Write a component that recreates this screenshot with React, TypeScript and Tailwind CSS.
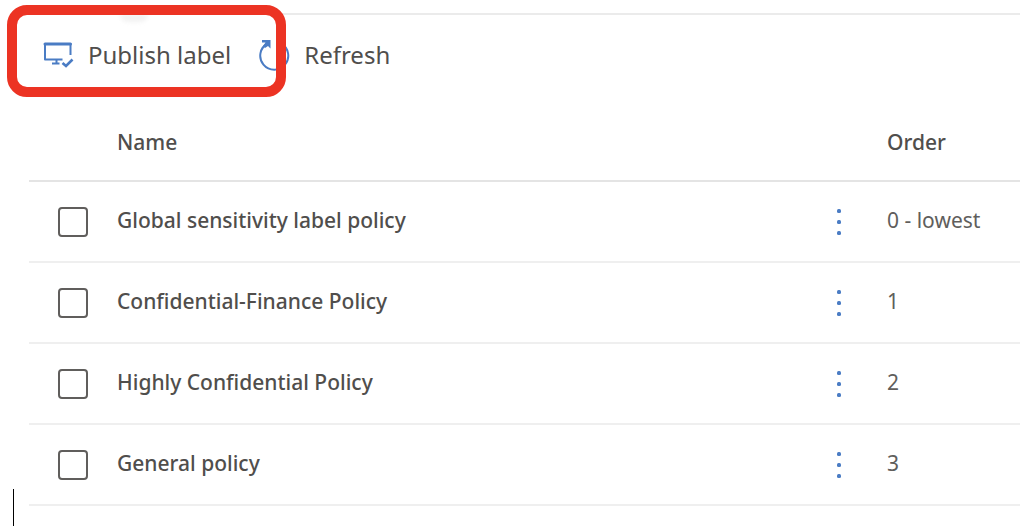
import React from "react";

type Policy = { name: string; order: string };

const policies: Policy[] = [
  { name: "Global sensitivity label policy", order: "0 - lowest" },
  { name: "Confidential-Finance Policy", order: "1" },
  { name: "Highly Confidential Policy", order: "2" },
  { name: "General policy", order: "3" },
];

function PublishIcon() {
  return (
    <svg width="32" height="28" viewBox="0 0 32 28" fill="none" stroke="#4a7cc4" strokeWidth="2" aria-hidden="true">
      <path d="M28.500 14V3H3v15.500h17.500" strokeLinejoin="round" />
      <path d="M3 3h25.500" strokeWidth="3" strokeLinecap="round" />
      <path d="M14.500 18.500v4M10 22.500h7.500" />
      <path d="M20.500 22l3.500 3 6.500-6.500" strokeWidth="2.600" />
    </svg>
  );
}

function RefreshIcon() {
  return (
    <svg width="32" height="32" viewBox="0 0 32 32" fill="none" stroke="#4a7cc4" strokeWidth="2" aria-hidden="true">
      <path d="M9.500 4.500A14 14 0 1 0 23 4.500" />
      <path d="M4 1h8.500v8.500l-2.500-2.500-3 2-2-2 2.500-3.500H4z" fill="#4a7cc4" stroke="none" />
    </svg>
  );
}

function MoreIcon() {
  return (
    <svg width="6" height="28" viewBox="0 0 6 28" fill="#4a7cc4" aria-hidden="true">
      <rect x="1" y="1" width="4" height="4" rx="1.500" />
      <rect x="1" y="12" width="4" height="4" rx="1.500" />
      <rect x="1" y="23" width="4" height="4" rx="1.500" />
    </svg>
  );
}

export default function App() {
  return (
    <main className="relative min-h-screen overflow-hidden bg-white pt-[13px] pr-1 pl-[29px] font-['Noto_Sans','Open_Sans',sans-serif] text-[#504e4c]">
      <div className="flex h-[89px] items-start border-t-2 border-[#ebebeb] pt-6 pl-[13px]">
        <button type="button" className="flex h-8 items-center gap-[14px] text-2xl">
          <PublishIcon />
          <span>Publish label</span>
        </button>
        <button type="button" className="ml-[27px] flex h-8 items-center gap-[14px] text-2xl">
          <RefreshIcon />
          <span>Refresh</span>
        </button>
      </div>

      <table className="w-full table-fixed border-separate border-spacing-0 text-left text-[21px]">
        <colgroup>
          <col className="w-[88px]" />
          <col />
          <col className="w-[60px]" />
          <col className="w-[133px]" />
        </colgroup>
        <thead>
          <tr className="h-20">
            <td className="border-b-2 border-[#e4e4e4]" />
            <th scope="col" className="border-b-2 border-[#e4e4e4] pt-1 font-medium">Name</th>
            <td className="border-b-2 border-[#e4e4e4]" />
            <th scope="col" className="border-b-2 border-[#e4e4e4] pt-1 font-medium">Order</th>
          </tr>
        </thead>
        <tbody>
          {policies.map((policy) => (
            <tr key={policy.name} className="h-[81px]">
              <td className="border-b-2 border-[#efefef] pl-[29px]">
                <input
                  type="checkbox"
                  aria-label={"Select " + policy.name}
                  className="block size-[30px] appearance-none rounded-[4px] border-2 border-[#605e5c] bg-white checked:bg-[#4a7cc4]"
                />
              </td>
              <th scope="row" className="border-b-2 border-[#efefef] pb-[2px] font-medium">{policy.name}</th>
              <td className="border-b-2 border-[#efefef]">
                <button type="button" aria-label={"More actions for " + policy.name} className="flex px-[9px]">
                  <MoreIcon />
                </button>
              </td>
              <td className="border-b-2 border-[#efefef] pb-[2px] whitespace-nowrap text-[#605e5c]">{policy.order}</td>
            </tr>
          ))}
        </tbody>
      </table>

      <div className="pointer-events-none absolute top-[14px] left-[120px] h-2 w-7 rounded-b-full bg-[#f2f2f2] blur-[2px]" />
      <div className="pointer-events-none absolute top-[5px] left-[7px] h-[92px] w-[279px] rounded-[20px] border-10 border-[#ec3323]" />
      <div className="absolute top-[489px] left-[13px] h-[37px] w-px bg-black" />
    </main>
  );
}
